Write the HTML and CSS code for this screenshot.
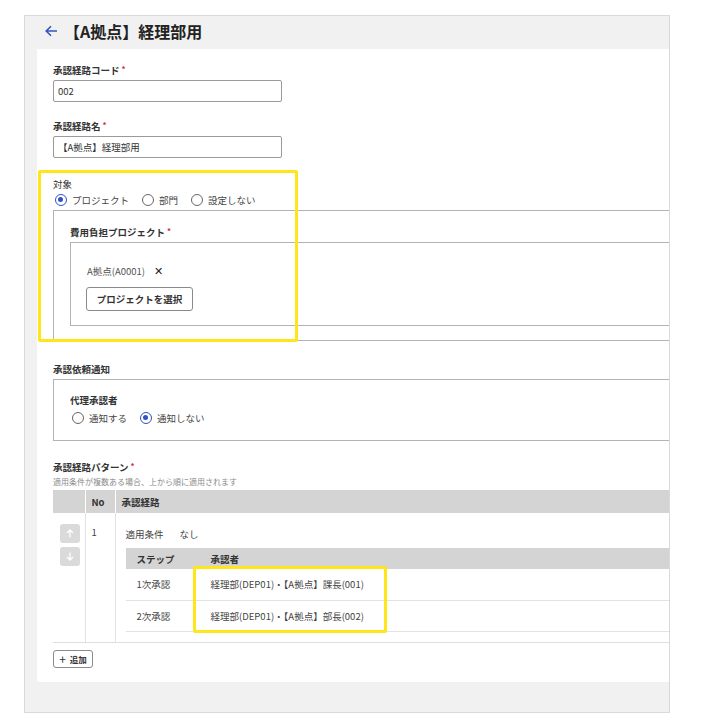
FILE: index.html
```html
<!DOCTYPE html>
<html lang="ja">
<head>
    <meta charset="UTF-8">
    <meta name="viewport" content="width=device-width, initial-scale=1.0">
    <title>承認経路</title>
    <link rel="stylesheet" href="styles.css">
</head>
<body>
    <div class="frame">
        <div class="head">
            <svg class="back" width="13" height="12" viewBox="0 0 13 12">
                <path d="M12 6H1.5M6 1.2L1.2 6 6 10.8" fill="none" stroke="#3454c4" stroke-width="1.6"/>
            </svg>
            <h1>【A拠点】経理部用</h1>
        </div>
        <div class="card">
            <div class="label">承認経路コード<span class="req">*</span></div>
            <div class="input">002</div>

            <div class="label gap">承認経路名<span class="req">*</span></div>
            <div class="input">【A拠点】経理部用</div>

            <div class="label plain gap-l">対象</div>
            <div class="radios">
                <span class="radio checked"></span><span class="opt">プロジェクト</span>
                <span class="radio"></span><span class="opt">部門</span>
                <span class="radio"></span><span class="opt">設定しない</span>
            </div>
            <div class="box target">
                <div class="label">費用負担プロジェクト<span class="req">*</span></div>
                <div class="box inner">
                    <div class="chip">A拠点(A0001)<span class="x">✕</span></div>
                    <button class="btn select">プロジェクトを選択</button>
                </div>
            </div>

            <div class="label gap-xl">承認依頼通知</div>
            <div class="box notify">
                <div class="label">代理承認者</div>
                <div class="radios sub">
                    <span class="radio"></span><span class="opt">通知する</span>
                    <span class="radio checked"></span><span class="opt">通知しない</span>
                </div>
            </div>

            <div class="label gap-l">承認経路パターン<span class="req">*</span></div>
            <div class="help">適用条件が複数ある場合、上から順に適用されます</div>
            <table class="routes">
                <thead>
                    <tr><th class="c-move"></th><th class="c-no">No</th><th>承認経路</th></tr>
                </thead>
                <tbody>
                    <tr>
                        <td class="c-move">
                            <div class="move">
                                <svg width="8" height="9" viewBox="0 0 8 9"><path d="M4 8.5V1M1 4l3-3 3 3" fill="none" stroke="#fff" stroke-width="1.3"/></svg>
                            </div>
                            <div class="move">
                                <svg width="8" height="9" viewBox="0 0 8 9"><path d="M4 .5V8M1 5l3 3 3-3" fill="none" stroke="#fff" stroke-width="1.3"/></svg>
                            </div>
                        </td>
                        <td class="c-no">1</td>
                        <td class="c-route">
                            <div class="cond"><span>適用条件</span><span class="none">なし</span></div>
                            <table class="steps">
                                <thead>
                                    <tr><th class="c-step">ステップ</th><th>承認者</th></tr>
                                </thead>
                                <tbody>
                                    <tr><td>1次承認</td><td>経理部(DEP01)・【A拠点】課長(001)</td></tr>
                                    <tr><td>2次承認</td><td>経理部(DEP01)・【A拠点】部長(002)</td></tr>
                                </tbody>
                            </table>
                        </td>
                    </tr>
                </tbody>
            </table>
            <button class="btn add"><span class="plus">+</span>追加</button>
        </div>
    </div>

    <div class="mark mark-target"></div>
    <div class="mark mark-steps"></div>
</body>
</html>
```

FILE: styles.css
```css
body {
    margin: 0;
    background: #fff;
    font-family: "Noto Sans CJK JP", "Noto Sans", sans-serif;
    color: #333;
    position: relative;
}
.frame {
    margin: 15px 0 0 24px;
    width: 646px;
    box-sizing: border-box;
    border: 1px solid #d9d9d9;
    background: #f1f1f1;
    padding-bottom: 30px;
    overflow: hidden;
}
.head {
    height: 33px;
    display: flex;
    align-items: center;
    padding-left: 20px;
    box-sizing: border-box;
    padding-bottom: 3px;
}
.back {
    display: block;
}
.head h1 {
    margin: 0 0 0 6px;
    font-size: 16px;
    font-weight: bold;
    color: #222;
    line-height: 20px;
}
.card {
    margin-left: 12px;
    background: #fff;
    border-radius: 0 0 0 3px;
    padding: 14px 0 14px 16px;
}
.label {
    font-size: 9.5px;
    line-height: 14px;
    height: 14px;
    font-weight: bold;
    color: #333;
    margin-bottom: 3px;
}
.label.plain {
    font-weight: normal;
    margin-bottom: 2px;
}
.gap { margin-top: 17px; }
.gap-l { margin-top: 19px; }
.gap-xl { margin-top: 21px; }
.req {
    color: #d9233b;
    margin-left: 2px;
    font-size: 8px;
    line-height: 0;
    vertical-align: 2px;
}
.input {
    width: 229px;
    height: 22px;
    box-sizing: border-box;
    border: 1px solid #9a9a9a;
    border-radius: 2px;
    font-size: 9.5px;
    line-height: 20px;
    padding-left: 4px;
    color: #333;
}
.radios {
    display: flex;
    align-items: center;
    height: 14px;
    font-size: 9.5px;
    color: #444;
}
.radio {
    width: 12px;
    height: 12px;
    box-sizing: border-box;
    border: 1.3px solid #666;
    border-radius: 50%;
    margin: 0 5px 0 2px;
    position: relative;
}
.radio.checked {
    border-color: #2e52c6;
}
.radio.checked::after {
    content: "";
    position: absolute;
    left: 2px;
    top: 2px;
    width: 5.4px;
    height: 5.4px;
    border-radius: 50%;
    background: #2e52c6;
}
.opt {
    margin-right: 11px;
}
.box {
    border: 1px solid #b3b3b3;
    border-right: 0;
}
.target {
    margin-top: 3px;
    padding: 14px 0 14px 16px;
}
.inner {
    padding: 20px 0 14px 16px;
}
.chip {
    font-size: 9.5px;
    line-height: 14px;
    color: #555;
}
.x {
    margin-left: 9px;
    color: #222;
    font-size: 11px;
}
.btn {
    display: block;
    background: #fff;
    border: 1px solid #8a8a8a;
    border-radius: 3px;
    font-family: inherit;
    font-weight: bold;
    color: #333;
    padding: 0;
}
.select {
    margin: 9px 0 0 -1px;
    width: 107px;
    height: 24px;
    font-size: 9.5px;
}
.notify {
    padding: 13px 0 15px 16px;
}
.radios.sub {
    margin-top: 4px;
}
.help {
    font-size: 8px;
    line-height: 12px;
    color: #8a8a8a;
    margin-top: -1px;
}
.routes {
    margin-top: 2px;
    width: 100%;
    table-layout: fixed;
    border-collapse: collapse;
    font-size: 9.5px;
    color: #444;
}
.routes th,
.routes td {
    box-sizing: border-box;
}
.routes > thead th {
    background: #d4d4d4;
    height: 23px;
    padding: 0 0 0 6px;
    text-align: left;
    font-weight: bold;
    color: #333;
    border-left: 1px solid #fff;
}
.routes > thead th:first-child {
    border-left: 0;
}
.c-move { width: 32px; }
.c-no { width: 30px; }
.routes > tbody > tr > td {
    vertical-align: top;
    border-bottom: 1px solid #ddd;
    border-left: 1px solid #e2e2e2;
    line-height: 14px;
}
.routes > tbody > tr > td.c-move {
    border-left: 0;
    padding: 11px 0 0 7px;
}
.routes > tbody > tr > td.c-no {
    padding: 12px 0 0 6px;
}
.routes > tbody > tr > td.c-route {
    padding: 14px 0 10px 10px;
}
.move {
    width: 20px;
    height: 19px;
    border-radius: 3px;
    background: #dadada;
    display: flex;
    align-items: center;
    justify-content: center;
    margin-bottom: 4px;
}
.cond {
    line-height: 14px;
}
.none {
    margin-left: 16px;
}
.steps {
    margin-top: 7px;
    width: 100%;
    table-layout: fixed;
    border-collapse: collapse;
}
.steps th {
    background: #d4d4d4;
    height: 21px;
    padding: 0 0 0 11px;
    text-align: left;
    font-weight: bold;
    color: #333;
}
.steps td {
    height: 31px;
    padding: 0 0 0 11px;
    border-bottom: 1px solid #e3e3e3;
}
.c-step {
    width: 74px;
}
.add {
    margin-top: 7px;
    width: 40px;
    height: 18px;
    font-size: 8.5px;
    display: flex;
    align-items: center;
    justify-content: center;
}
.plus {
    font-size: 12px;
    font-weight: normal;
    margin-right: 4px;
    line-height: 12px;
}
.mark {
    position: absolute;
    border: 3.5px solid #ffe61a;
    border-radius: 2px;
    box-sizing: border-box;
}
.mark-target {
    left: 38px;
    top: 170px;
    width: 260px;
    height: 172px;
}
.mark-steps {
    left: 193px;
    top: 566px;
    width: 194px;
    height: 67px;
}
```
